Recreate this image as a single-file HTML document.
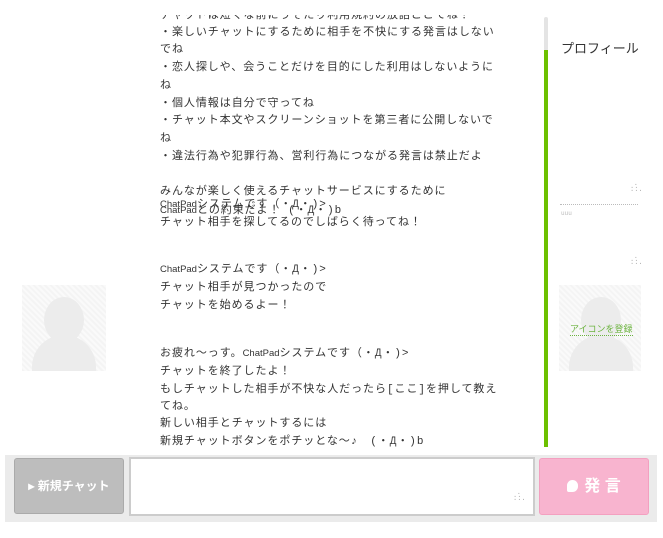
<!DOCTYPE html>
<html><head><meta charset="utf-8"><style>
body{margin:0;width:663px;height:538px;background:#fff;position:relative;overflow:hidden;font-family:"Liberation Mono","Noto Sans CJK JP",monospace;}
.l{position:absolute;left:160px;font-size:11px;letter-spacing:0.95px;color:#333;white-space:nowrap;line-height:12px}
.l i{font-style:normal;letter-spacing:0;font-size:9.5px;font-family:"Liberation Sans Narrow","Liberation Sans",sans-serif}
.av{position:absolute;width:84px;height:86px;background:repeating-linear-gradient(45deg,#f4f4f4 0 2px,#fafafa 2px 4px);overflow:hidden}
.av .h{position:absolute;left:22px;top:12px;width:40px;height:46px;border-radius:50%;background:#ececec}
.av .b{position:absolute;left:10px;top:50px;width:64px;height:60px;border-radius:32px 32px 0 0;background:#ececec}
.dots{position:absolute;width:8px;height:9px;font-size:7px;color:#aaa;line-height:3px;text-align:right}
</style></head><body>
<div class="l" style="top:10px;clip-path:inset(5px 0 0 0)">チャットは短くな前にうそたり利用規約の放話ここてね！</div>
<div class="l" style="top:27px">・楽しいチャットにするために相手を不快にする発言はしない</div>
<div class="l" style="top:44px">でね</div>
<div class="l" style="top:62px">・恋人探しや、会うことだけを目的にした利用はしないように</div>
<div class="l" style="top:80px">ね</div>
<div class="l" style="top:98px">・個人情報は自分で守ってね</div>
<div class="l" style="top:115px">・チャット本文やスクリーンショットを第三者に公開しないで</div>
<div class="l" style="top:133px">ね</div>
<div class="l" style="top:151px">・違法行為や犯罪行為、営利行為につながる発言は禁止だよ</div>
<div class="l" style="top:186px">みんなが楽しく使えるチャットサービスにするために</div>
<div class="l" style="top:199px"><i>ChatPad</i>システムです（・Д・)></div>
<div class="l" style="top:205px"><i>ChatPad</i>との約束だよ！ (・Д・)b</div>
<div class="l" style="top:217px">チャット相手を探してるのでしばらく待ってね！</div>
<div class="l" style="top:264px"><i>ChatPad</i>システムです（・Д・)></div>
<div class="l" style="top:282px">チャット相手が見つかったので</div>
<div class="l" style="top:300px">チャットを始めるよー！</div>
<div class="l" style="top:348px">お疲れ〜っす。<i>ChatPad</i>システムです（・Д・)></div>
<div class="l" style="top:366px">チャットを終了したよ！</div>
<div class="l" style="top:384px">もしチャットした相手が不快な人だったら[ここ]を押して教え</div>
<div class="l" style="top:401px">てね。</div>
<div class="l" style="top:418px">新しい相手とチャットするには</div>
<div class="l" style="top:436px">新規チャットボタンをポチッとな〜♪　(・Д・)b</div>

<div style="position:absolute;left:544px;top:17px;width:4px;height:34px;background:#e4e4e4;border-radius:2px"></div>
<div style="position:absolute;left:544px;top:50px;width:4px;height:397px;background:#6cc000"></div>
<div style="position:absolute;left:561px;top:38px;font-family:'Liberation Sans','Noto Sans CJK JP',sans-serif;font-size:13px;color:#333">プロフィール</div>
<div class="dots" style="left:630px;top:183px">.<br>..<br>...</div>
<div style="position:absolute;left:560px;top:204px;width:78px;border-top:1px dotted #bbb"></div>
<div style="position:absolute;left:561px;top:210px;font-size:6px;color:#bbb">uuu</div>
<div class="dots" style="left:630px;top:256px">.<br>..<br>...</div>

<div class="av" style="left:22px;top:285px"><div class="h"></div><div class="b"></div></div>
<div class="av" style="left:559px;top:285px;width:82px"><div class="h"></div><div class="b"></div>
<div style="position:absolute;left:11px;top:37px;font-family:'Liberation Sans','Noto Sans CJK JP',sans-serif;font-size:9px;color:#6cb33f;border-bottom:1px dotted #6cb33f;white-space:nowrap">アイコンを登録</div></div>

<div style="position:absolute;left:5px;top:455px;width:652px;height:67px;background:#ebebeb"></div>
<div style="position:absolute;left:14px;top:458px;width:108px;height:54px;background:#bdbdbd;border:1px solid #aaa;border-radius:3px;color:#fff;font-family:'Liberation Sans','Noto Sans CJK JP',sans-serif;font-size:12px;font-weight:bold;line-height:54px;text-align:center">▸ 新規チャット</div>
<div style="position:absolute;left:129px;top:457px;width:402px;height:55px;background:#fff;border:2px solid #ccc"></div>
<div class="dots" style="left:513px;top:492px">.<br>..<br>...</div>
<div style="position:absolute;left:539px;top:458px;width:108px;height:55px;background:#f8b4cf;border:1px solid #f3a0c0;border-radius:3px;color:#fff;font-family:'Liberation Sans','Noto Sans CJK JP',sans-serif;font-size:16px;font-weight:bold;line-height:55px;text-align:center"><span style="display:inline-block;width:11px;height:12px;background:#fff;border-radius:6px 6px 6px 2px;vertical-align:-1px;margin-right:6px"></span>発 言</div>
</body></html>
